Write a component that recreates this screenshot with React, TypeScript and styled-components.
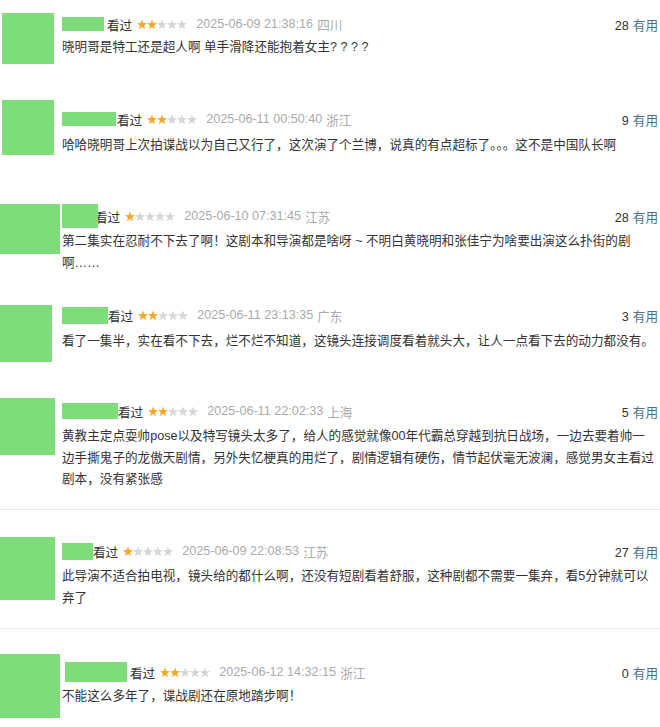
import styled, { createGlobalStyle } from 'styled-components';

const GlobalStyle = createGlobalStyle`
  body {
    margin: 0;
    background: #fff;
  }
`;

const Page = styled.div`
  width: 660px;
  padding-top: 13px;
  font-family: "Liberation Sans", Arial, "Noto Sans CJK SC", sans-serif;
  color: #333;
  overflow: hidden;
`;

const Item = styled.div<{ $h: number; $mt: number }>`
  display: grid;
  grid-template-columns: 62px 1fr;
  height: ${(p) => p.$h}px;
  margin-top: ${(p) => p.$mt}px;
`;

const Avatar = styled.div<{ $w: number; $h: number; $x: number }>`
  width: ${(p) => p.$w}px;
  height: ${(p) => p.$h}px;
  margin-left: ${(p) => p.$x}px;
  background: #7edc7b;
`;

const Body = styled.div<{ $pt: number }>`
  min-width: 0;
  padding-top: ${(p) => p.$pt}px;
  overflow: hidden;
`;

const Meta = styled.div`
  display: flex;
  align-items: center;
  height: 20px;
  font-size: 12.6px;
  white-space: nowrap;
`;

const NameBox = styled.span<{ $w: number; $h: number; $ml: number; $mr: number }>`
  position: relative;
  z-index: 1;
  flex-shrink: 0;
  width: ${(p) => p.$w}px;
  height: ${(p) => p.$h}px;
  margin-left: ${(p) => p.$ml}px;
  margin-right: ${(p) => p.$mr}px;
  background: #7edc7b;
`;

const Watched = styled.span`
  color: #333;
`;

const StarRow = styled.svg`
  margin-left: 5px;
  flex-shrink: 0;
`;

const Time = styled.span`
  margin-left: 9px;
  color: #aaa;
`;

const Place = styled.span`
  margin-left: 4px;
  color: #aaa;
`;

const Votes = styled.span`
  margin-left: auto;
  padding-right: 2px;
  color: #333;
`;

const Useful = styled.span`
  margin-left: 4px;
  color: #4f6f8f;
`;

const Text = styled.p<{ $gap: number }>`
  margin: ${(p) => p.$gap}px 0 0;
  font-size: 12.6px;
  line-height: 21.5px;
  white-space: pre;
  color: #333;
`;

const Divider = styled.div`
  height: 1px;
  background: #e8e8e8;
`;

const STAR = '5,0 6.3,3.6 10,3.7 7.1,6 8.1,9.8 5,7.6 1.9,9.8 2.9,6 0,3.7 3.7,3.6';

const Stars = ({ n }: { n: number }) => (
  <StarRow width="50" height="11" viewBox="0 0 50 11">
    {[0, 1, 2, 3, 4].map((i) => (
      <polygon
        key={i}
        points={STAR}
        transform={`translate(${i * 10} 0.5)`}
        fill={i < n ? '#f7a828' : '#d6d6d6'}
      />
    ))}
  </StarRow>
);

type Comment = {
  mt: number;
  h: number;
  avatar: { w: number; h: number; x: number };
  name: { w: number; h: number; ml: number; mr: number };
  pt: number;
  gap: number;
  stars: number;
  time: string;
  place: string;
  votes: number;
  text: string;
  divider?: boolean;
};

const comments: Comment[] = [
  {
    mt: 0, h: 87,
    avatar: { w: 52, h: 51, x: 2 },
    name: { w: 42, h: 14, ml: 0, mr: 3 },
    pt: 1, gap: 3,
    stars: 2, time: '2025-06-09 21:38:16', place: '四川', votes: 28,
    text: '晓明哥是特工还是超人啊 单手滑降还能抱着女主? ? ? ?',
  },
  {
    mt: 0, h: 104,
    avatar: { w: 52, h: 55, x: 2 },
    name: { w: 56, h: 14, ml: -2, mr: 1 },
    pt: 9, gap: 6,
    stars: 2, time: '2025-06-11 00:50:40', place: '浙江', votes: 9,
    text: '哈哈晓明哥上次拍谍战以为自己又行了，这次演了个兰博，说真的有点超标了。。。这不是中国队长啊',
  },
  {
    mt: 0, h: 101,
    avatar: { w: 60, h: 50, x: 0 },
    name: { w: 38, h: 24, ml: -2, mr: -3 },
    pt: 2, gap: 5,
    stars: 1, time: '2025-06-10 07:31:45', place: '江苏', votes: 28,
    text: '第二集实在忍耐不下去了啊！这剧本和导演都是啥呀 ~ 不明白黄晓明和张佳宁为啥要出演这么扑街的剧\n啊……',
  },
  {
    mt: 0, h: 93,
    avatar: { w: 52, h: 57, x: 0 },
    name: { w: 48, h: 17, ml: -2, mr: 0 },
    pt: 0, gap: 6,
    stars: 2, time: '2025-06-11 23:13:35', place: '广东', votes: 3,
    text: '看了一集半，实在看不下去，烂不烂不知道，这镜头连接调度看着就头大，让人一点看下去的动力都没有。',
  },
  {
    mt: 0, h: 111,
    avatar: { w: 55, h: 57, x: 0 },
    name: { w: 58, h: 16, ml: -2, mr: 0 },
    pt: 3, gap: 5,
    stars: 2, time: '2025-06-11 22:02:33', place: '上海', votes: 5,
    text: '黄教主定点耍帅pose以及特写镜头太多了，给人的感觉就像00年代霸总穿越到抗日战场，一边去要着帅一\n边手撕鬼子的龙傲天剧情，另外失忆梗真的用烂了，剧情逻辑有硬伤，情节起伏毫无波澜，感觉男女主看过\n剧本，没有紧张感',
    divider: true,
  },
  {
    mt: 27, h: 91,
    avatar: { w: 55, h: 63, x: 0 },
    name: { w: 33, h: 17, ml: -2, mr: 0 },
    pt: 4, gap: 5,
    stars: 1, time: '2025-06-09 22:08:53', place: '江苏', votes: 27,
    text: '此导演不适合拍电视，镜头给的都什么啊，还没有短剧看着舒服，这种剧都不需要一集弃，看5分钟就可以\n弃了',
    divider: true,
  },
  {
    mt: 25, h: 73,
    avatar: { w: 60, h: 64, x: 0 },
    name: { w: 62, h: 20, ml: 3, mr: 3 },
    pt: 8, gap: 4,
    stars: 2, time: '2025-06-12 14:32:15', place: '浙江', votes: 0,
    text: '不能这么多年了，谍战剧还在原地踏步啊！',
  },
];

const App = () => (
  <>
    <GlobalStyle />
    <Page>
      {comments.map((c, i) => (
        <div key={i}>
          <Item $h={c.h} $mt={c.mt}>
            <Avatar $w={c.avatar.w} $h={c.avatar.h} $x={c.avatar.x} />
            <Body $pt={c.pt}>
              <Meta>
                <NameBox $w={c.name.w} $h={c.name.h} $ml={c.name.ml} $mr={c.name.mr} />
                <Watched>看过</Watched>
                <Stars n={c.stars} />
                <Time>{c.time}</Time>
                <Place>{c.place}</Place>
                <Votes>
                  {c.votes}
                  <Useful>有用</Useful>
                </Votes>
              </Meta>
              <Text $gap={c.gap}>{c.text}</Text>
            </Body>
          </Item>
          {c.divider && <Divider />}
        </div>
      ))}
    </Page>
  </>
);

export default App;
